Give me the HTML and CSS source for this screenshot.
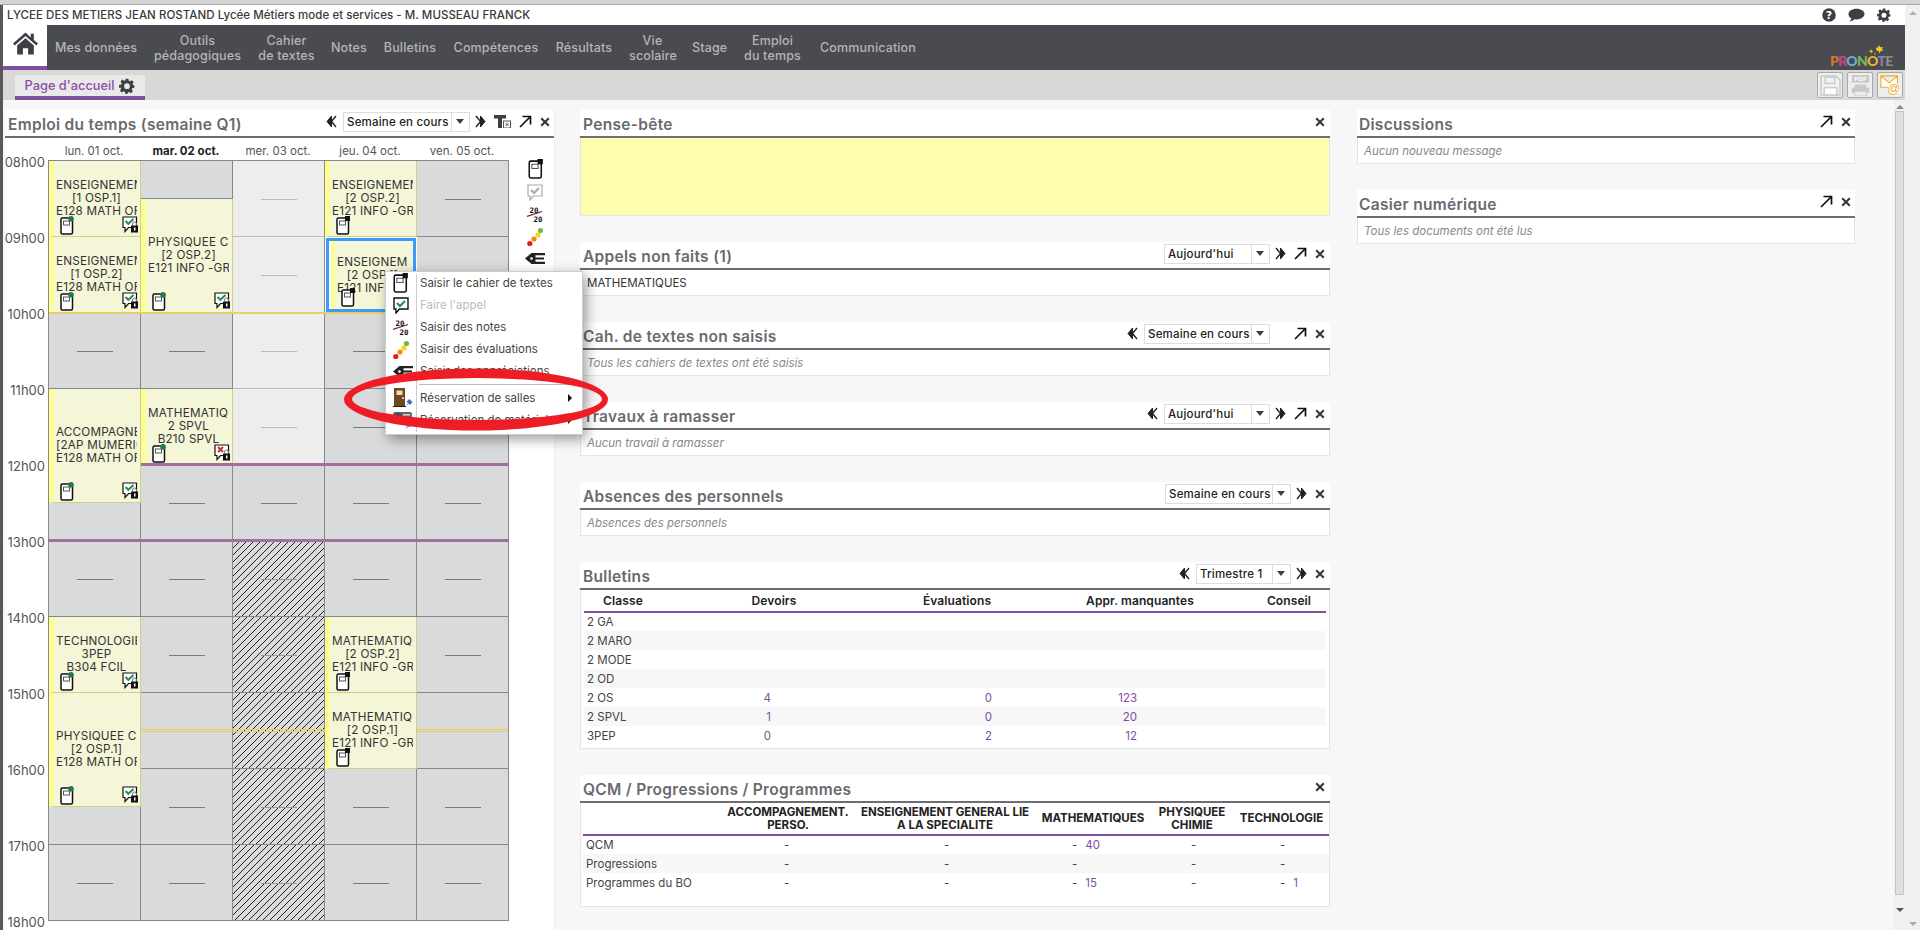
FILE: index.html
```html
<!DOCTYPE html>
<html lang="fr">
<head>
<meta charset="utf-8">
<title>PRONOTE</title>
<link rel="stylesheet" href="styles.css">
</head>
<body>
<svg class="defs" aria-hidden="true">
  <symbol id="i-doc" viewBox="0 0 14 19"><rect x="1" y="2" width="11.5" height="16" rx="1.5" fill="#fff" stroke="#111" stroke-width="1.5"/><rect x="3.5" y="5" width="6" height="4" fill="none" stroke="#555"/></symbol>
  <symbol id="i-doc-g" viewBox="0 0 14 19"><use href="#i-doc"/><circle cx="11" cy="2.8" r="2.8" fill="#1d7a55"/></symbol>
  <symbol id="i-doc-k" viewBox="0 0 14 19"><use href="#i-doc"/><rect x="9" y="0" width="5" height="5" fill="#111"/></symbol>
  <symbol id="i-check" viewBox="0 0 16 17"><path d="M1 1h13.500v10.500H6.500L3 15.500v-4H1z" fill="#fff" stroke="#111" stroke-width="1.200"/><path d="M3.500 5l2.800 2.800L11.500 3" fill="none" stroke="#2b8a5e" stroke-width="2"/><path d="M10.500 9.500V8a2 2 0 0 1 4 0v1.500" fill="none" stroke="#777"/><rect x="9" y="9.500" width="7" height="7" fill="#111"/><rect x="12" y="11.500" width="1.500" height="3" fill="#fff"/></symbol>
  <symbol id="i-cross" viewBox="0 0 16 17"><path d="M1 1h13.500v10.500H6.500L3 15.500v-4H1z" fill="#fff" stroke="#111" stroke-width="1.200"/><path d="M4 3l5 5M9 3L4 8" fill="none" stroke="#c8303a" stroke-width="2"/><path d="M10.500 9.500V8a2 2 0 0 1 4 0v1.500" fill="none" stroke="#777"/><rect x="9" y="9.500" width="7" height="7" fill="#111"/><rect x="12" y="11.500" width="1.500" height="3" fill="#fff"/></symbol>
  <symbol id="i-bubble" viewBox="0 0 16 17"><path d="M1 1h14v11H6.500L3 16v-4H1z" fill="#fff" stroke="#111" stroke-width="1.400"/><path d="M4 6l3 3 5-5" fill="none" stroke="#2b8a5e" stroke-width="2.200"/></symbol>
  <symbol id="i-bubble-off" viewBox="0 0 16 17"><path d="M1 1h14v11H6.500L3 16v-4H1z" fill="#fff" stroke="#aaa" stroke-width="1.200"/><path d="M4 6l3 3 5-5" fill="none" stroke="#aaa" stroke-width="2.200"/></symbol>
  <symbol id="i-note" viewBox="0 0 16 16"><text x="2.500" y="6.500" class="note-num">20</text><path d="M0 10.500L15 5.500" stroke="#6b2430" stroke-width="1.200"/><text x="6.500" y="15.500" class="note-num">20</text></symbol>
  <symbol id="i-dots" viewBox="0 0 16 21"><circle cx="2.800" cy="17.500" r="2.600" fill="#f01818"/><circle cx="7" cy="13" r="2.600" fill="#f08a1e"/><circle cx="11" cy="9" r="2.600" fill="#f5d60f"/><circle cx="13.500" cy="4.500" r="2.600" fill="#6cb84c"/></symbol>
  <symbol id="i-pen" viewBox="0 0 20 11"><path d="M0 5.500L6.500 0H20v2.200H10.500v2.200H19v2.200h-8.500v2.200H20V11H6.500z" fill="#222"/><circle cx="6.500" cy="5.500" r="1.300" fill="#fff"/></symbol>
  <symbol id="i-door" viewBox="0 0 20 20"><rect x="1" y="0" width="11" height="18" fill="#6b4a1d"/><rect x="3.500" y="2.500" width="6" height="4.500" fill="#e8dcc0"/><circle cx="10" cy="10" r=".9" fill="#fff"/><path d="M0 18.500h13" stroke="#222"/><path d="M12 19l3-4 -1.500-1.500 3-2.500 3 3-2.500 3-1.500-1.500z" fill="#3d72c8"/></symbol>
  <symbol id="i-gear-box" viewBox="0 0 20 20"><rect x="0" y="2" width="19" height="10" rx="2" fill="#666"/><circle cx="5" cy="6" r="3.500" fill="#3d4a6b"/><rect x="10" y="4" width="7" height="1.600" fill="#ccc"/><rect x="10" y="8" width="7" height="1.600" fill="#ccc"/><path d="M12 19l2.500-3 -1-1 3-2 2 2-2 2.500-1-1z" fill="#3d72c8"/></symbol>
  <symbol id="i-left" viewBox="0 0 11 13"><path d="M5.500 1L1 6.500 5.500 12z" fill="#222" stroke="#222" stroke-linejoin="round"/><path d="M10 1L5.500 6.500 10 12" fill="#fff" stroke="#222" stroke-width="1.400"/></symbol>
  <symbol id="i-right" viewBox="0 0 11 13"><path d="M5.500 1L10 6.500 5.500 12z" fill="#222" stroke="#222" stroke-linejoin="round"/><path d="M1 1L5.500 6.500 1 12" fill="#fff" stroke="#222" stroke-width="1.400"/></symbol>
  <symbol id="i-expand" viewBox="0 0 13 13"><path d="M1 12L11.500 1.500M3.500 1.500h8v8" fill="none" stroke="#111" stroke-width="1.700"/></symbol>
  <symbol id="i-close" viewBox="0 0 10 10"><path d="M1.200 1.200l7.600 7.600M8.800 1.200L1.200 8.800" fill="none" stroke="#333" stroke-width="2"/></symbol>
  <symbol id="i-gear" viewBox="0 0 24 24"><path d="M10 1h4l.7 3.200 1.900.8 2.800-1.800 2.800 2.800-1.800 2.800.8 1.900L23 10.500v4l-3.200.7-.8 1.900 1.800 2.800-2.800 2.800-2.800-1.800-1.900.8L12.600 24h-3l-.7-3.200-1.900-.8-2.800 1.800-2.800-2.800 1.800-2.800-.8-1.900L0 14.500v-4l3.200-.7.800-1.900-1.800-2.800 2.800-2.800L7.800 4.100l1.900-.8zM12 8a4.300 4.300 0 1 0 0 8.600A4.300 4.300 0 0 0 12 8z" fill="#3d3f45" fill-rule="evenodd"/></symbol>
</svg>

<div class="topstrip"></div>
<div class="window">
  <div class="app">
    <div class="infobar">
      <span>LYCEE DES METIERS JEAN ROSTAND Lycée Métiers mode et services - M. MUSSEAU FRANCK</span>
      <div class="infoicons">
        <svg class="info-ic" viewBox="0 0 14 14"><circle cx="7" cy="7" r="6.800" fill="#3d3f45"/><text x="7" y="11" class="qmark">?</text></svg>
        <svg class="info-ic wide" viewBox="0 0 17 14"><path d="M8.500 0.800c4.500 0 8 2.300 8 5.300s-3.500 5.300-8 5.300c-.8 0-1.500 0-2.200-.2C5 12.500 3.500 13.400 1.500 13.500c1-.8 1.600-2 1.700-3.200C1.400 9.400.500 7.900.500 6.100c0-3 3.500-5.300 8-5.300z" fill="#3d3f45"/></svg>
        <svg class="info-ic"><use href="#i-gear"/></svg>
      </div>
    </div>
    <nav class="nav">
      <div class="home">
        <svg class="home-ic" viewBox="0 0 24 22"><path d="M12 1L0 11.500l1.600 1.800L12 4.200l10.400 9.100 1.600-1.800-4-3.500V2h-3v3.800z" fill="#3d3f45"/><path d="M4 13.500L12 6.500l8 7V22h-5.500v-6h-5v6H4z" fill="#3d3f45"/></svg>
      </div>
      <ul class="menu-items">
        <li>Mes données</li>
        <li>Outils<br>pédagogiques</li>
        <li>Cahier<br>de textes</li>
        <li>Notes</li>
        <li>Bulletins</li>
        <li>Compétences</li>
        <li>Résultats</li>
        <li>Vie<br>scolaire</li>
        <li>Stage</li>
        <li>Emploi<br>du temps</li>
        <li>Communication</li>
      </ul>
      <div class="logo">
        <svg class="logo-fly" viewBox="0 0 16 10"><path d="M8 3l2-.8L11 0l1.200 2.200L15 2l-1 2.200 1.500 1.300-2.800.6L11.500 8.500l-.8-2.300L8.500 5.500zM1 6l1.500-.6L3.200 4l.6 1.800 1.500.7-1.500.7-.7 1.400-.6-1.500zM6 8.500l1-.8.8.8-.8 1z" fill="#f2c81e"/></svg>
        <div class="logo-text"><span class="l1">P</span><span class="l2">R</span><span class="l3">O</span><span class="l4">N</span><span class="l5">O</span><span class="l6">T</span><span class="l7">E</span></div>
      </div>
    </nav>
    <div class="tabbar">
      <div class="tab">Page d'accueil <svg class="tab-gear"><use href="#i-gear"/></svg></div>
      <div class="tools">
        <div class="tool">
          <svg viewBox="0 0 20 20"><path d="M1 1h14l4 4v14H1z" fill="#f2f2f2" stroke="#ccc" stroke-width="1.500"/><rect x="5" y="2" width="9" height="6" fill="none" stroke="#ccc" stroke-width="1.500"/><rect x="4" y="12" width="12" height="7" fill="#fff" stroke="#ccc" stroke-width="1.500"/></svg>
        </div>
        <div class="tool">
          <svg viewBox="0 0 22 22"><rect x="2" y="0" width="18" height="8" fill="#c9c9c9"/><text x="11" y="6.800" class="pdf">PDF</text><rect x="5" y="10" width="12" height="4" fill="#c9c9c9"/><rect x="2" y="13" width="18" height="6" rx="1" fill="#c9c9c9"/><rect x="5" y="17" width="12" height="5" fill="#eee" stroke="#c9c9c9"/></svg>
        </div>
        <div class="tool">
          <svg viewBox="0 0 24 24"><path d="M1 1h19v13H1zM1 1l9.500 8L20 1" fill="#fff" stroke="#e8ae2c" stroke-width="1.300"/><circle cx="16" cy="16" r="7.500" fill="#fff"/><text x="16" y="21" class="at">@</text></svg>
        </div>
      </div>
    </div>

    <div class="main">
      <div class="content">
        <section class="col col-edt">
          <header class="phead">
            <h2>Emploi du temps (semaine Q1)</h2>
            <div class="pctl">
              <svg class="ic-nav"><use href="#i-left"/></svg>
              <div class="sel sel-edt"><span>Semaine en cours</span><i></i></div>
              <svg class="ic-nav"><use href="#i-right"/></svg>
              <svg class="ic-tbl" viewBox="0 0 17 13"><path d="M0 0h12v3.500H8V13H4V3.500H0z" fill="#3d3f45"/><rect x="9.500" y="6" width="7" height="7" fill="#fff" stroke="#555"/><path d="M11.500 8l3 3M14.500 8l-3 3" stroke="#555"/></svg>
              <svg class="ic-exp"><use href="#i-expand"/></svg>
              <svg class="ic-x"><use href="#i-close"/></svg>
            </div>
          </header>
          <div class="edt">
            <div class="hours">
              <div>08h00</div><div>09h00</div><div>10h00</div><div>11h00</div><div>12h00</div><div>13h00</div><div>14h00</div><div>15h00</div><div>16h00</div><div>17h00</div><div>18h00</div>
            </div>
            <div class="planning">
              <div class="days">
                <div>lun. 01 oct.</div><div class="today">mar. 02 oct.</div><div>mer. 03 oct.</div><div>jeu. 04 oct.</div><div>ven. 05 oct.</div>
              </div>
              <div class="grid">
                <div class="day">
                  <div class="slot h2 course"><div class="ctext"><p>ENSEIGNEMENT GENERAL</p><p>[1 OSP.1]</p><p>E128 MATH ORDI</p></div><svg class="cdoc"><use href="#i-doc-g"/></svg><svg class="ccheck"><use href="#i-check"/></svg></div>
                  <div class="slot h2 course"><div class="ctext"><p>ENSEIGNEMENT GENERAL</p><p>[1 OSP.2]</p><p>E128 MATH ORDI</p></div><svg class="cdoc"><use href="#i-doc-g"/></svg><svg class="ccheck"><use href="#i-check"/></svg></div>
                  <div class="slot h2 empty"></div>
                  <div class="slot h3 course"><div class="ctext"><p>ACCOMPAGNEMENT</p><p>[2AP MUMERIQUE]</p><p>E128 MATH ORDI</p></div><svg class="cdoc"><use href="#i-doc-g"/></svg><svg class="ccheck"><use href="#i-check"/></svg></div>
                  <div class="slot h1"></div>
                  <div class="slot h2 empty"></div>
                  <div class="slot h2 course"><div class="ctext"><p>TECHNOLOGIE</p><p>3PEP</p><p>B304 FCIL</p></div><svg class="cdoc"><use href="#i-doc-g"/></svg><svg class="ccheck"><use href="#i-check"/></svg></div>
                  <div class="slot h3 course"><div class="ctext"><p>PHYSIQUEE CHIMIE</p><p>[2 OSP.1]</p><p>E128 MATH ORDI</p></div><svg class="cdoc"><use href="#i-doc-g"/></svg><svg class="ccheck"><use href="#i-check"/></svg></div>
                  <div class="slot h1"></div>
                  <div class="slot h2 empty"></div>
                </div>
                <div class="day">
                  <div class="slot h1"></div>
                  <div class="slot h3 course"><div class="ctext"><p>PHYSIQUEE CHIMIE</p><p>[2 OSP.2]</p><p>E121 INFO -GRP</p></div><svg class="cdoc"><use href="#i-doc-g"/></svg><svg class="ccheck"><use href="#i-check"/></svg></div>
                  <div class="slot h2 empty"></div>
                  <div class="slot h2 course"><div class="ctext"><p>MATHEMATIQUES</p><p>2 SPVL</p><p>B210 SPVL</p></div><svg class="cdoc"><use href="#i-doc-g"/></svg><svg class="ccheck"><use href="#i-cross"/></svg></div>
                  <div class="slot h2 empty"></div>
                  <div class="slot h2 empty"></div>
                  <div class="slot h2 empty"></div>
                  <div class="slot h2 empty"></div>
                  <div class="slot h2 empty"></div>
                  <div class="slot h2 empty"></div>
                </div>
                <div class="day">
                  <div class="slot h2 empty off"></div>
                  <div class="slot h2 empty off"></div>
                  <div class="slot h2 empty off"></div>
                  <div class="slot h2 empty off"></div>
                  <div class="slot h2 empty"></div>
                  <div class="slot h2 empty hatch"></div>
                  <div class="slot h2 empty hatch"></div>
                  <div class="slot h2 empty hatch"></div>
                  <div class="slot h2 empty hatch"></div>
                  <div class="slot h2 empty hatch"></div>
                </div>
                <div class="day">
                  <div class="slot h2 course"><div class="ctext"><p>ENSEIGNEMENT GENERAL</p><p>[2 OSP.2]</p><p>E121 INFO -GRP</p></div><svg class="cdoc"><use href="#i-doc-k"/></svg></div>
                  <div class="slot h2 course selected"><div class="ctext"><p>ENSEIGNEMENT GENERAL</p><p>[2 OSP.1]</p><p>E121 INFO -GRP</p></div><svg class="cdoc"><use href="#i-doc-k"/></svg></div>
                  <div class="slot h2 empty"></div>
                  <div class="slot h2 empty"></div>
                  <div class="slot h2 empty"></div>
                  <div class="slot h2 empty"></div>
                  <div class="slot h2 course"><div class="ctext"><p>MATHEMATIQUES</p><p>[2 OSP.2]</p><p>E121 INFO -GRP</p></div><svg class="cdoc"><use href="#i-doc-k"/></svg></div>
                  <div class="slot h2 course"><div class="ctext"><p>MATHEMATIQUES</p><p>[2 OSP.1]</p><p>E121 INFO -GRP</p></div><svg class="cdoc"><use href="#i-doc-k"/></svg></div>
                  <div class="slot h2 empty"></div>
                  <div class="slot h2 empty"></div>
                </div>
                <div class="day">
                  <div class="slot h2 empty"></div>
                  <div class="slot h2 empty"></div>
                  <div class="slot h2 empty"></div>
                  <div class="slot h2 empty"></div>
                  <div class="slot h2 empty"></div>
                  <div class="slot h2 empty"></div>
                  <div class="slot h2 empty"></div>
                  <div class="slot h2 empty"></div>
                  <div class="slot h2 empty"></div>
                  <div class="slot h2 empty"></div>
                </div>
                <div class="mark pink pink-12"></div>
                <div class="mark pink pink-13"></div>
                <div class="mark gold gold-10"></div>
                <div class="mark gold2 gold-a"></div>
                <div class="mark gold2 gold-b"></div>
              </div>
            </div>
            <div class="sidetools">
              <svg class="st-doc"><use href="#i-doc-k"/></svg>
              <svg class="st-bubble"><use href="#i-bubble-off"/></svg>
              <svg class="st-note"><use href="#i-note"/></svg>
              <svg class="st-dots"><use href="#i-dots"/></svg>
              <svg class="st-pen"><use href="#i-pen"/></svg>
            </div>
          </div>
        </section>

        <div class="col col-mid">
          <section class="panel">
            <header class="phead"><h2>Pense-bête</h2><div class="pctl"><svg class="ic-x"><use href="#i-close"/></svg></div></header>
            <div class="memo"></div>
          </section>
          <section class="panel">
            <header class="phead"><h2>Appels non faits (1)</h2><div class="pctl"><div class="sel sel-day"><span>Aujourd'hui</span><i></i></div><svg class="ic-nav"><use href="#i-right"/></svg><svg class="ic-exp"><use href="#i-expand"/></svg><svg class="ic-x"><use href="#i-close"/></svg></div></header>
            <div class="pbody">MATHEMATIQUES</div>
          </section>
          <section class="panel">
            <header class="phead"><h2>Cah. de textes non saisis</h2><div class="pctl"><svg class="ic-nav"><use href="#i-left"/></svg><div class="sel sel-week"><span>Semaine en cours</span><i></i></div><span class="ic-nav"></span><svg class="ic-exp"><use href="#i-expand"/></svg><svg class="ic-x"><use href="#i-close"/></svg></div></header>
            <div class="pbody note">Tous les cahiers de textes ont été saisis</div>
          </section>
          <section class="panel">
            <header class="phead"><h2>Travaux à ramasser</h2><div class="pctl"><svg class="ic-nav"><use href="#i-left"/></svg><div class="sel sel-day"><span>Aujourd'hui</span><i></i></div><svg class="ic-nav"><use href="#i-right"/></svg><svg class="ic-exp"><use href="#i-expand"/></svg><svg class="ic-x"><use href="#i-close"/></svg></div></header>
            <div class="pbody note">Aucun travail à ramasser</div>
          </section>
          <section class="panel">
            <header class="phead"><h2>Absences des personnels</h2><div class="pctl"><div class="sel sel-week"><span>Semaine en cours</span><i></i></div><svg class="ic-nav"><use href="#i-right"/></svg><svg class="ic-x"><use href="#i-close"/></svg></div></header>
            <div class="pbody note">Absences des personnels</div>
          </section>
          <section class="panel">
            <header class="phead"><h2>Bulletins</h2><div class="pctl"><svg class="ic-nav"><use href="#i-left"/></svg><div class="sel sel-trim"><span>Trimestre 1</span><i></i></div><svg class="ic-nav"><use href="#i-right"/></svg><svg class="ic-x"><use href="#i-close"/></svg></div></header>
            <div class="tbody tbody-b">
              <table class="tb bull">
                <thead><tr><th>Classe</th><th>Devoirs</th><th>Évaluations</th><th>Appr. manquantes</th><th>Conseil</th></tr></thead>
                <tbody>
                  <tr><td>2 GA</td><td></td><td></td><td></td><td></td></tr>
                  <tr><td>2 MARO</td><td></td><td></td><td></td><td></td></tr>
                  <tr><td>2 MODE</td><td></td><td></td><td></td><td></td></tr>
                  <tr><td>2 OD</td><td></td><td></td><td></td><td></td></tr>
                  <tr><td>2 OS</td><td>4</td><td>0</td><td>123</td><td></td></tr>
                  <tr><td>2 SPVL</td><td>1</td><td>0</td><td>20</td><td></td></tr>
                  <tr><td>3PEP</td><td>0</td><td>2</td><td>12</td><td></td></tr>
                </tbody>
              </table>
            </div>
          </section>
          <section class="panel">
            <header class="phead"><h2>QCM / Progressions / Programmes</h2><div class="pctl"><svg class="ic-x"><use href="#i-close"/></svg></div></header>
            <div class="tbody tbody-q">
              <table class="tb qcm">
                <thead><tr><th></th><th>ACCOMPAGNEMENT.<br>PERSO.</th><th>ENSEIGNEMENT GENERAL LIE<br>A LA SPECIALITE</th><th>MATHEMATIQUES</th><th>PHYSIQUEE<br>CHIMIE</th><th>TECHNOLOGIE</th></tr></thead>
                <tbody>
                  <tr><td>QCM</td><td>-</td><td>-</td><td>-<b>40</b></td><td>-</td><td>-</td></tr>
                  <tr><td>Progressions</td><td>-</td><td>-</td><td>-</td><td>-</td><td>-</td></tr>
                  <tr><td>Programmes du BO</td><td>-</td><td>-</td><td>-<b>15</b></td><td>-</td><td>-<b>1</b></td></tr>
                </tbody>
              </table>
            </div>
          </section>
        </div>

        <div class="col col-right">
          <section class="panel">
            <header class="phead"><h2>Discussions</h2><div class="pctl"><svg class="ic-exp"><use href="#i-expand"/></svg><svg class="ic-x"><use href="#i-close"/></svg></div></header>
            <div class="pbody note">Aucun nouveau message</div>
          </section>
          <section class="panel">
            <header class="phead"><h2>Casier numérique</h2><div class="pctl"><svg class="ic-exp"><use href="#i-expand"/></svg><svg class="ic-x"><use href="#i-close"/></svg></div></header>
            <div class="pbody note">Tous les documents ont été lus</div>
          </section>
        </div>
      </div>
      <div class="inner-scroll"><span class="arr up"></span><div class="thumb"></div><span class="arr down dark"></span></div>
    </div>
  </div>
  <div class="outer-scroll"><span class="arr up"></span><span class="arr down"></span></div>
</div>

<div class="ctx">
  <ul>
    <li><svg class="m-doc"><use href="#i-doc-k"/></svg>Saisir le cahier de textes</li>
    <li class="dis"><svg class="m-bub"><use href="#i-bubble"/></svg>Faire l'appel</li>
    <li><svg class="m-note"><use href="#i-note"/></svg>Saisir des notes</li>
    <li><svg class="m-dots"><use href="#i-dots"/></svg>Saisir des évaluations</li>
    <li><svg class="m-pen"><use href="#i-pen"/></svg>Saisir des appréciations</li>
    <li class="sep"></li>
    <li class="sub"><svg class="m-door"><use href="#i-door"/></svg>Réservation de salles</li>
    <li class="sub"><svg class="m-door"><use href="#i-gear-box"/></svg>Réservation de matériel</li>
  </ul>
</div>
<svg class="ring" viewBox="0 0 280 70"><path fill-rule="evenodd" fill="#ee1c25" d="M4 34.500a132 31 0 1 0 264 0a132 31 0 1 0-264 0zM12 34a125 21 0 1 1 250 0a125 21 0 1 1-250 0z"/></svg>
</body>
</html>
```

FILE: styles.css
```css
* { box-sizing: border-box; }
html, body { margin: 0; height: 100%; overflow: hidden; }
body {
  font-family: Inter, "Noto Sans", sans-serif;
  font-size: 12px;
  color: #333;
  background: #f7f7f7;
  display: flex;
  flex-direction: column;
  position: relative;
}
.defs { display: none; }
.note-num { font: bold 7.500px "DejaVu Sans Mono", monospace; fill: #111; }
.qmark { font: bold 11px "DejaVu Sans", sans-serif; fill: #fff; text-anchor: middle; }
.pdf { font: bold 6.500px "Liberation Sans", sans-serif; fill: #fff; text-anchor: middle; }
.at { font: 15px "Liberation Sans", sans-serif; fill: #e8ae2c; text-anchor: middle; }

.topstrip { height: 5px; background: #d4d4d4; border-bottom: 1px solid #a8a8a8; flex: none; }
.window { flex: 1; display: flex; min-height: 0; }
.app { flex: 1; min-width: 0; display: flex; flex-direction: column; border-left: 3px solid #58585a; }
.outer-scroll { width: 15px; background: #f0f0f0; display: flex; flex-direction: column; justify-content: space-between; align-items: center; padding: 6px 0 4px; }

.arr { width: 0; height: 0; border-left: 4px solid transparent; border-right: 4px solid transparent; }
.arr.up { border-bottom: 4px solid #b0b0b0; }
.arr.down { border-top: 4px solid #aaa; }
.arr.down.dark { border-top-color: #555; }

.infobar { height: 20px; background: #fff; display: flex; align-items: center; justify-content: space-between; padding: 0 14px 0 4px; font-size: 11.500px; font-weight: 500; color: #3a3a3a; letter-spacing: .04px; }
.infoicons { display: flex; align-items: center; gap: 12px; }
.info-ic { width: 14px; height: 14px; }
.info-ic.wide { width: 17px; }

.nav { height: 45px; background: #4a4b50; display: flex; position: relative; }
.home { width: 44px; background: #fff; border-bottom: 4px solid #7f4e9f; display: flex; justify-content: center; padding-top: 6px; }
.home-ic { width: 25px; height: 24px; }
.menu-items { list-style: none; margin: 0; padding: 0 0 0 8px; display: grid; grid-template-columns: 82px 89px 57px 36px 54px 86px 58px 47px 35px 59px 100px; column-gap: 16px; align-items: center; color: #b5b5b5; font-weight: 500; font-size: 12.500px; line-height: 15px; text-align: center; white-space: nowrap; letter-spacing: .15px; }
.menu-items li { display: block; }
.logo { position: absolute; right: 13px; bottom: 4px; width: 62px; height: 21px; }
.logo-fly { position: absolute; left: 38px; top: 0; width: 16px; height: 10px; }
.logo-text { position: absolute; left: 0; bottom: -2px; font: 900 14px/15px Lato, sans-serif; letter-spacing: -.7px; white-space: nowrap; }
.l1 { color: #d9772a; } .l2 { color: #c9447f; } .l3 { color: #6baed6; } .l4 { color: #7ab55c; } .l5 { color: #e8b72a; } .l6 { color: #8a7cc0; } .l7 { color: #8f8f7a; }

.tabbar { height: 30px; background: #d8d8d8; display: flex; justify-content: space-between; padding: 5px 2px 0 12px; position: relative; }
.tab { width: 130px; height: 25px; background: #e9e9e9; border-bottom: 4px solid #7f4e9f; color: #8b4fa8; font-size: 12.800px; font-weight: 500; display: flex; align-items: center; justify-content: center; gap: 5px; }
.tab-gear { width: 16px; height: 16px; }
.tools { display: flex; gap: 4px; margin-top: -3px; }
.tool { width: 26px; height: 26px; background: #eee; border: 1px solid #a9a9a9; border-radius: 2px; display: flex; align-items: center; justify-content: center; }
.tool svg { width: 21px; height: 21px; }

.main { flex: 1; display: flex; min-height: 0; background: #f7f7f7; }
.content { flex: 1; display: flex; padding: 10px 0 0 2px; min-width: 0; }
.inner-scroll { width: 11px; background: #f0f0f0; display: flex; flex-direction: column; align-items: center; padding-top: 5px; }
.inner-scroll .thumb { width: 9px; height: 784px; margin: 2px 0 13px; background: #e0e0e0; border: 1px solid #c4c4c4; }
.inner-scroll .arr.up { border-bottom-color: #888; }

.col { display: flex; flex-direction: column; }
.col-edt { width: 550px; background: #fff; border-right: 1px solid #f0f0f0; }
.col-mid { width: 750px; margin-left: 25px; gap: 26px; }
.col-right { width: 498px; margin-left: 27px; gap: 26px; }

.phead { height: 28px; flex: none; background: #fff; border-bottom: 2px solid #6e6e72; display: flex; align-items: center; justify-content: space-between; padding: 0 5px 0 3px; }
.col-right .phead { padding-left: 2px; padding-right: 4px; }
.col-edt .phead { padding-right: 4px; }
.phead h2 { margin: 0; font-size: 15.500px; font-weight: 600; color: #6a6a6e; letter-spacing: .3px; padding-top: 2px; white-space: nowrap; }
.pctl { display: flex; align-items: center; gap: 8px; margin-top: -3px; }
.ic-nav { width: 11px; height: 13px; display: block; }
.ic-exp { width: 13px; height: 13px; }
.ic-x { width: 10px; height: 10px; }
.ic-tbl { width: 17px; height: 13px; }
.sel { height: 20px; background: #fff; border: 1px solid #ddd; display: flex; align-items: stretch; font-size: 11.500px; font-weight: 500; color: #222; white-space: nowrap; letter-spacing: .2px; }
.sel span { flex: 1; padding: 0 3px; line-height: 18px; overflow: hidden; }
.sel i { width: 18px; flex: none; border-left: 1px solid #ddd; position: relative; }
.sel i::after { content: ""; position: absolute; left: 4px; top: 6px; border-left: 4px solid transparent; border-right: 4px solid transparent; border-top: 5px solid #3d3f45; }
.ic-nav + .sel { margin-left: -2px; }
.sel + .ic-nav { margin-left: -3px; }
.sel-edt { width: 127px; }
.sel-day { width: 106px; }
.sel-week { width: 126px; }
.sel-trim { width: 95px; }

.panel { display: flex; flex-direction: column; }
.pbody { height: 26px; background: #fff; border: 1px solid #e4e4e4; border-top: 0; padding: 0 6px; display: flex; align-items: center; font-size: 11.500px; color: #333; }
.pbody.note { font-style: italic; color: #888; }
.memo { height: 78px; background: #fdfdae; border: 1px solid #e4e4e4; border-top: 0; }

.edt { display: flex; position: relative; height: 792px; }
.hours { width: 43px; padding: 16px 3px 0 0; display: flex; flex-direction: column; align-items: flex-end; font-size: 13px; color: #555; white-space: nowrap; }
.hours div { height: 76px; line-height: 16px; flex: none; }
.hours div:last-child { height: 16px; }
.planning { width: 460px; }
.days { display: grid; grid-template-columns: repeat(5, 92px); height: 22px; padding-top: 6px; text-align: center; font-size: 11.500px; color: #555; line-height: 14px; }
.days .today { font-weight: 700; color: #222; }
.grid { display: flex; position: relative; width: 461px; height: 761px; border: solid #888; border-width: 1px 0 0 1px; }
.day { width: 92px; display: flex; flex-direction: column; }
.slot { flex: none; background: #d9dadc; border-right: 1px solid #888; border-bottom: 1px solid #888; position: relative; overflow: hidden; }
.h1 { height: 38px; }
.h2 { height: 76px; }
.h3 { height: 114px; }
.empty::after { content: ""; position: absolute; left: 50%; top: 50%; width: 36px; margin-left: -18px; border-top: 1px solid #7a7a7a; }
.off { background: #ecedec; border-bottom-color: #bbb; }
.off::after { border-top-color: #bbb; }
.hatch { background: #d9dadc url("data:image/svg+xml,%3Csvg xmlns='http://www.w3.org/2000/svg' width='7' height='7'%3E%3Cpath d='M-1 1L1 -1M0 7L7 0M6 8L8 6' stroke='%23222' stroke-width='1'/%3E%3C/svg%3E"); }
.hatch::after { border-top-color: #999; }
.course { background: #f5f5d8; border-left: 5px solid #fdfd96; border-right-color: #cfcf86; border-bottom-color: #cfcf86; display: flex; align-items: center; padding: 0 3px 0 2px; }
.ctext { width: 100%; overflow: hidden; text-align: center; font-size: 11.700px; line-height: 13px; white-space: nowrap; color: #333; letter-spacing: .2px; }
.ctext p { margin: 0; }
.cdoc { position: absolute; left: 6px; bottom: 1px; width: 14px; height: 19px; }
.ccheck { position: absolute; right: 2px; bottom: 3px; width: 16px; height: 17px; }
.selected { outline: 3px solid #3a9bfa; outline-offset: -4px; border: 1px solid #fff; padding-left: 11px; padding-right: 8px; box-shadow: inset 5px 0 0 #fff, inset 9px 0 0 #fdfd96; }
.selected .cdoc { left: 15px; bottom: 5px; }

.mark { position: absolute; pointer-events: none; }
.pink { height: 3px; background: #a06f9e; }
.pink-12 { left: 92px; width: 368px; top: 302px; }
.pink-13 { left: 0; width: 460px; top: 378px; }
.gold { height: 2px; background: #e9cf6a; left: 0; width: 368px; top: 151px; }
.gold2 { height: 3px; border-top: 1px solid #e8cf5a; border-bottom: 1px solid #e8cf5a; top: 568px; }
.gold-a { left: 92px; width: 184px; }
.gold-b { left: 368px; width: 91px; }

.sidetools { position: absolute; left: 520px; top: 21px; display: flex; flex-direction: column; align-items: center; width: 20px; }
.st-doc { width: 15px; height: 20px; }
.st-bubble { width: 16px; height: 17px; margin-top: 5px; }
.st-note { width: 16px; height: 16px; margin-top: 5px; }
.st-dots { width: 16px; height: 21px; margin-top: 4px; }
.st-pen { width: 20px; height: 11px; margin-top: 6px; }

.tbody { background: #fff; border: 1px solid #e4e4e4; border-top: 0; }
.tbody-b { height: 159px; padding: 0 3px; }
.tbody-q { height: 104px; padding: 0 0 0 2px; }
.tb { width: 100%; border-collapse: collapse; table-layout: fixed; font-size: 11.500px; }
.tb th { font-weight: 600; color: #222; padding: 0; border-bottom: 2px solid #7f4e9f; font-size: 12px; text-align: center; letter-spacing: .1px; white-space: nowrap; }
.tb td { padding: 0; height: 19px; color: #444; white-space: nowrap; }
.tb tbody tr:nth-child(even) { background: #f7f7f7; }
.bull th { height: 22px; }
.bull th:nth-child(1), .bull td:nth-child(1) { width: 78px; }
.bull th:nth-child(2), .bull td:nth-child(2) { width: 224px; }
.bull th:nth-child(3), .bull td:nth-child(3) { width: 142px; }
.bull th:nth-child(4), .bull td:nth-child(4) { width: 224px; }
.bull td:first-child { padding-left: 3px; }
.bull td:nth-child(2) { text-align: right; padding-right: 115px; color: #7f4e9f; }
.bull td:nth-child(3) { text-align: right; padding-right: 36px; color: #7f4e9f; }
.bull td:nth-child(4) { text-align: right; padding-right: 115px; color: #7f4e9f; }
.qcm th { height: 32px; line-height: 13px; font-size: 11.500px; font-weight: 700; letter-spacing: 0; }
.qcm th:nth-child(1) { width: 139px; }
.qcm th:nth-child(2) { width: 132px; }
.qcm th:nth-child(3) { width: 182px; }
.qcm th:nth-child(4) { width: 114px; }
.qcm th:nth-child(5) { width: 84px; }
.qcm td:first-child { padding-left: 3px; }
.qcm td:nth-child(2) { padding-left: 62px; }
.qcm td:nth-child(3) { padding-left: 90px; }
.qcm td:nth-child(4) { padding-left: 36px; }
.qcm td:nth-child(5) { padding-left: 41px; }
.qcm td:nth-child(6) { padding-left: 46px; }
.qcm b { font-weight: 400; color: #7f4e9f; margin-left: 8px; }

.ctx { position: absolute; left: 385px; top: 271px; width: 198px; height: 164px; background: #fff; border: 1px solid #ccc; box-shadow: 3px 4px 12px rgba(0,0,0,.4); }
.ctx::before { content: ""; position: absolute; left: 30px; top: 2px; bottom: 2px; border-left: 1px solid #ccc; }
.ctx ul { list-style: none; margin: 0; padding: 0; }
.ctx li { height: 22px; display: flex; align-items: center; padding-left: 34px; font-size: 11.500px; color: #444; position: relative; white-space: nowrap; }
.ctx li.dis { color: #bbb; }
.ctx li.sep { height: 5px; }
.ctx li.sep::after { content: ""; position: absolute; left: 33px; right: 6px; top: 2px; border-top: 1px solid #bbb; }
.ctx li.sub::after { content: ""; position: absolute; right: 10px; top: 7px; border-left: 4px solid #111; border-top: 4px solid transparent; border-bottom: 4px solid transparent; }
.ctx li svg { position: absolute; left: 7px; }
.m-doc { width: 15px; height: 20px; }
.m-bub { width: 16px; height: 17px; }
.m-note { width: 16px; height: 16px; }
.m-dots { width: 16px; height: 21px; }
.m-pen { width: 20px; height: 11px; }
.m-door { width: 20px; height: 20px; }
.ring { position: absolute; left: 340px; top: 365px; width: 280px; height: 70px; }
```
